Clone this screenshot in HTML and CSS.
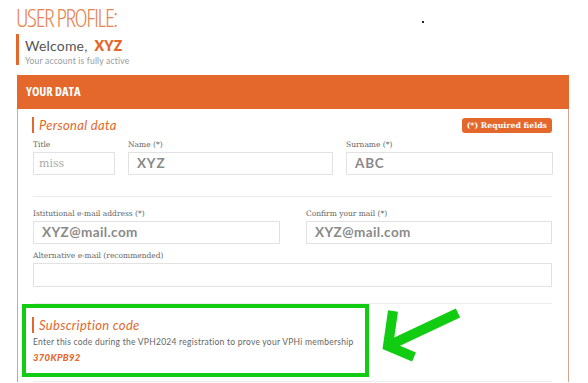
FILE: index.html
```html
<!DOCTYPE html>
<html lang="en">
<head>
    <meta charset="UTF-8">
    <meta name="viewport" content="width=device-width, initial-scale=1.0">
    <title>User profile</title>
    <link rel="stylesheet" href="styles.css">
</head>
<body>
    <div class="page">
        <h1 class="page-title">USER PROFILE:</h1>
        <span class="stray-dot"></span>

        <div class="welcome">
            <p class="welcome-line">Welcome, <strong>XYZ</strong></p>
            <p class="welcome-note">Your account is fully active</p>
        </div>

        <div class="panel">
            <div class="panel-header">YOUR DATA</div>
            <div class="panel-body">
                <div class="section-head">
                    <h2 class="section-title">Personal data</h2>
                    <span class="required-badge">(*) Required fields</span>
                </div>

                <div class="row row-names">
                    <div class="field">
                        <label>Title</label>
                        <div class="input input-serif">miss</div>
                    </div>
                    <div class="field">
                        <label>Name (*)</label>
                        <div class="input">XYZ</div>
                    </div>
                    <div class="field">
                        <label>Surname (*)</label>
                        <div class="input">ABC</div>
                    </div>
                </div>

                <hr class="divider">

                <div class="row row-mails">
                    <div class="field">
                        <label>Istitutional e-mail address (*)</label>
                        <div class="input input-mail">XYZ@mail.com</div>
                    </div>
                    <div class="field">
                        <label>Confirm your mail (*)</label>
                        <div class="input input-mail">XYZ@mail.com</div>
                    </div>
                </div>

                <div class="field field-alt">
                    <label>Alternative e-mail (recommended)</label>
                    <div class="input"></div>
                </div>

                <hr class="divider">

                <div class="subscription">
                    <h2 class="section-title">Subscription code</h2>
                    <p class="subscription-text">Enter this code during the VPH2024 registration to prove your VPHi membership</p>
                    <p class="subscription-code">370KPB92</p>
                </div>

                <hr class="divider divider-last">
            </div>
        </div>

        <!-- annotation arrow -->
        <svg class="arrow" width="90" height="60" viewBox="0 0 90 60">
            <path d="M80 8 L12 40" stroke="#11cc11" stroke-width="10" fill="none"/>
            <path d="M15 6 L10 41 L36 52" stroke="#11cc11" stroke-width="10" fill="none" stroke-linejoin="miter"/>
        </svg>
    </div>
</body>
</html>
```

FILE: styles.css
```css
* {
    margin: 0;
    padding: 0;
    box-sizing: border-box;
}

body {
    font-family: 'Open Sans', 'Noto Sans', sans-serif;
    background: #fff;
    color: #555;
    overflow: hidden;
}

.page {
    position: relative;
    padding: 3px 0 0 16px;
    width: 588px;
    height: 383px;
}

.page-title {
    font-family: 'Open Sans', sans-serif;
    font-stretch: 75%;
    font-weight: 300;
    font-size: 25px;
    line-height: 28px;
    color: #e8834f;
    letter-spacing: -1.4px;
}

.stray-dot {
    position: absolute;
    left: 422px;
    top: 21px;
    width: 2px;
    height: 2px;
    background: #222;
}

.welcome {
    margin-top: 3px;
    border-left: 3px solid #e4682b;
    padding: 4px 0 2px 6px;
    height: 31px;
}

.welcome-line {
    font-family: 'Lato', sans-serif;
    font-size: 14px;
    line-height: 16px;
    color: #555;
    letter-spacing: 0.2px;
}

.welcome-line strong {
    color: #e4682b;
    font-weight: 800;
    margin-left: 3px;
}

.welcome-note {
    font-family: 'Lato', sans-serif;
    font-size: 8.5px;
    line-height: 10px;
    margin-top: 2px;
    color: #999;
    letter-spacing: 0.2px;
}

.panel {
    margin-top: 10px;
    width: 552px;
    margin-left: 1px;
    border-left: 1px solid #d6a58f;
    border-right: 1px solid #d6a58f;
}

.panel-header {
    background: #e4682b;
    height: 34px;
    margin: 0 -1px;
    padding-left: 9px;
    color: #fff;
    font-family: 'Open Sans', sans-serif;
    font-stretch: 75%;
    font-weight: 700;
    font-size: 12.5px;
    line-height: 34px;
}

.panel-body {
    padding: 8px 15px 0 15px;
}

.section-head {
    display: flex;
    align-items: center;
    justify-content: space-between;
    height: 16px;
}

.section-title {
    font-family: 'Lato', sans-serif;
    font-style: italic;
    font-weight: 400;
    font-size: 13px;
    line-height: 16px;
    color: #e4682b;
    border-left: 2px solid #e4682b;
    padding-left: 5px;
    margin-left: -1px;
    letter-spacing: 0.3px;
}

.required-badge {
    background: #e4682b;
    color: #fff;
    border-radius: 3px;
    font-family: 'DejaVu Serif', serif;
    font-weight: 700;
    font-size: 7.8px;
    line-height: 15px;
    padding: 0 5px;
    margin-right: 1px;
}

.row {
    display: grid;
}

.row-names {
    grid-template-columns: 82px 205px 1fr;
    column-gap: 13px;
    margin-top: 7px;
}

.row-mails {
    grid-template-columns: 247px 246px;
    column-gap: 26px;
    margin-top: 12px;
}

.field label {
    display: block;
    font-family: 'DejaVu Serif', serif;
    font-size: 7.5px;
    line-height: 9px;
    color: #666;
    margin-bottom: 3px;
}

.input {
    height: 23px;
    border: 1px solid #e2e2e2;
    padding-left: 8px;
    font-family: 'Lato', sans-serif;
    font-weight: 700;
    font-size: 13.5px;
    line-height: 21px;
    color: #8a8a8a;
    letter-spacing: 0.8px;
}

.input-serif {
    font-family: 'DejaVu Serif', serif;
    font-weight: 400;
    font-size: 11px;
    color: #aaa;
    padding-left: 5px;
    letter-spacing: 0;
}

.input-mail {
    letter-spacing: 0.4px;
}

.field-alt {
    margin-top: 7px;
    width: 519px;
}

.field-alt .input {
    height: 24px;
}

.divider {
    border: none;
    border-top: 1px solid #ececec;
    margin-top: 20px;
    width: 519px;
}

.row-names + .divider {
    margin-top: 21px;
}

.field-alt + .divider {
    margin-top: 16px;
}

.subscription {
    width: 347px;
    margin-left: -11px;
    margin-top: 0;
    border: 4px solid #11cc11;
    padding: 9px 0 5px 7px;
    height: 73px;
}

.subscription-text {
    font-family: 'Lato', sans-serif;
    font-size: 8.5px;
    line-height: 10px;
    color: #666;
    margin-top: 4px;
    letter-spacing: 0.25px;
}

.subscription-code {
    font-family: 'Lato', sans-serif;
    font-style: italic;
    font-weight: 900;
    font-size: 9.5px;
    line-height: 12px;
    color: #e4682b;
    margin-top: 5px;
    letter-spacing: 0.3px;
}

.divider-last {
    margin-top: 4px;
}

.arrow {
    position: absolute;
    left: 378px;
    top: 305px;
}
```
